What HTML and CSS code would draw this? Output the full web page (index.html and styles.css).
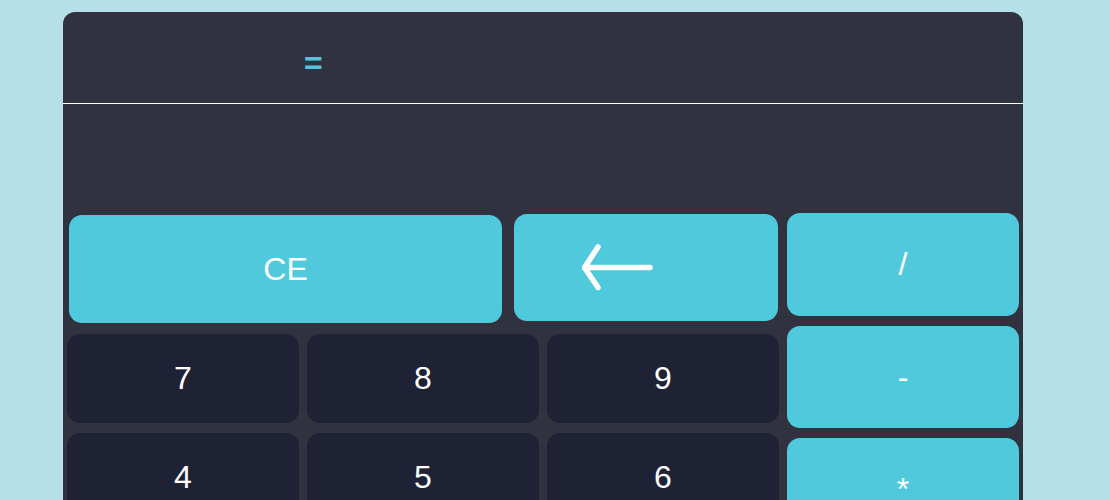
FILE: index.html
```
<!DOCTYPE html>
<html>
<head>
<meta charset="utf-8">
<link rel="stylesheet" href="styles.css">
</head>
<body>
<div class="calc">
  <div class="history"><span class="eq">=</span></div>
  <div class="display"></div>
  <div class="keypad">
    <div class="left">
      <div class="top-row">
        <button class="key accent ce">CE</button>
        <button class="key accent back" aria-label="backspace">
          <svg width="72" height="48" viewBox="0 0 72 48">
            <path d="M16 3 L2.5 23.5 L16 43.5 M2.5 23.5 L68 23.5" fill="none" stroke="#fff" stroke-width="5.5" stroke-linecap="round" stroke-linejoin="round"/>
          </svg>
        </button>
      </div>
      <div class="numbers">
        <button class="key num">7</button>
        <button class="key num">8</button>
        <button class="key num">9</button>
        <button class="key num">4</button>
        <button class="key num">5</button>
        <button class="key num">6</button>
      </div>
    </div>
    <div class="ops">
      <button class="key accent op op1">/</button>
      <button class="key accent op op2">-</button>
      <button class="key accent op op3">*</button>
    </div>
  </div>
</div>
</body>
</html>
```
FILE: styles.css
```
html, body {
  margin: 0;
  padding: 0;
  background: #b5e0e7;
  font-family: "Liberation Sans", Arial, sans-serif;
  overflow: hidden;
}
.calc {
  width: 960px;
  margin: 12px 0 0 63px;
  background: #31323f;
  border-radius: 12px 12px 0 0;
  height: 600px;
}
.history {
  border-bottom: 1px solid #ffffff;
  display: flex;
  align-items: center;
  padding-left: 241px;
  padding-top: 11px;
  box-sizing: border-box;
  height: 92px;
}
.eq {
  color: #4fc6de;
  font-size: 32px;
  font-weight: bold;
}
.display {
  height: 105px;
}
.keypad {
  display: flex;
}
.left {
  width: 720px;
}
.top-row {
  height: 125px;
  display: flex;
  align-items: flex-start;
}
.key {
  border: none;
  color: #ffffff;
  font-family: "Liberation Sans", Arial, sans-serif;
  font-size: 32px;
  display: flex;
  align-items: center;
  justify-content: center;
  padding: 0;
  border-radius: 13px;
}
.accent {
  background: #51c9dd;
}
.ce {
  margin: 6px 0 0 6px;
  width: 433px;
  height: 108px;
}
.back {
  margin: 5px 0 0 12px;
  width: 264px;
  height: 107px;
}
.back svg {
  margin-left: -56px;
}
.numbers {
  display: grid;
  grid-template-columns: repeat(3, 232px);
  grid-auto-rows: 89px;
  column-gap: 8px;
  row-gap: 10px;
  padding-left: 4px;
}
.num {
  background: #1f2235;
}
.ops {
  width: 240px;
  padding: 4px 4px 0;
  box-sizing: border-box;
  display: flex;
  flex-direction: column;
  gap: 10px;
}
.op {
  width: 232px;
}
.op1 { height: 103px; }
.op2 { height: 102px; }
.op3 { height: 102px; }
```
